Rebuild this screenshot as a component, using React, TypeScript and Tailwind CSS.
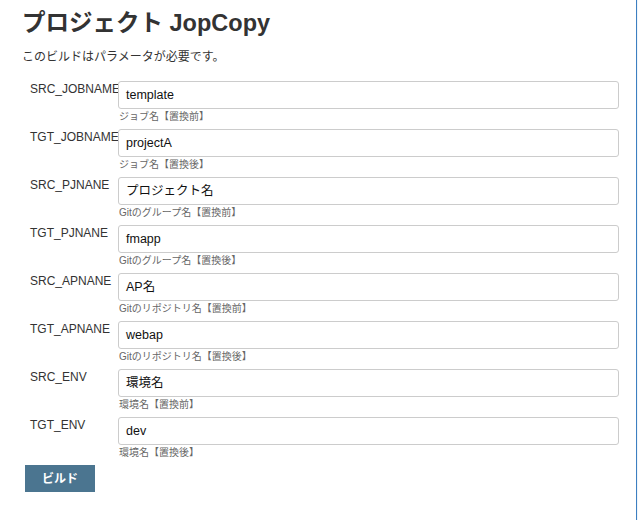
import React from "react";

const rows = [
  { name: "SRC_JOBNAME", value: "template", hint: "ジョブ名【置換前】" },
  { name: "TGT_JOBNAME", value: "projectA", hint: "ジョブ名【置換後】" },
  { name: "SRC_PJNANE", value: "プロジェクト名", hint: "Gitのグループ名【置換前】" },
  { name: "TGT_PJNANE", value: "fmapp", hint: "Gitのグループ名【置換後】" },
  { name: "SRC_APNANE", value: "AP名", hint: "Gitのリポジトリ名【置換前】" },
  { name: "TGT_APNANE", value: "webap", hint: "Gitのリポジトリ名【置換後】" },
  { name: "SRC_ENV", value: "環境名", hint: "環境名【置換前】" },
  { name: "TGT_ENV", value: "dev", hint: "環境名【置換後】" },
];

export default function App() {
  return (
    <div
      className="flex w-[638px] h-[520px] bg-white text-[#333]"
      style={{ fontFamily: '"Liberation Sans", "Noto Sans CJK JP", sans-serif' }}
    >
      <div className="flex-1 flex flex-col pl-[22px]">
        <h1 className="mt-[10px] text-[23.5px] leading-[26px] font-bold text-[#333]">
          プロジェクト JopCopy
        </h1>
        <p className="mt-[13px] text-[12px] leading-[16px] text-[#333]">
          このビルドはパラメータが必要です。
        </p>
        <div className="mt-[16px] flex flex-col">
          {rows.map((r) => (
            <div key={r.name} className="flex">
              <div className="w-[96px] pl-[8px] pt-[1px] text-[12px] leading-[14px] text-[#333] whitespace-nowrap">
                {r.name}
              </div>
              <div className="w-[501px] flex flex-col pb-[6px]">
                <div className="h-[28px] border border-[#cccccc] rounded-[3px] bg-white flex items-center pl-[7px] text-[12.5px] text-[#111]">
                  {r.value}
                </div>
                <div className="mt-[2px] text-[10px] leading-[12px] text-[#666] pl-[1px]">
                  {r.hint}
                </div>
              </div>
            </div>
          ))}
        </div>
        <div className="ml-[3px]">
          <button className="w-[70px] h-[27px] bg-[#4b7590] text-white text-[12px] font-bold flex items-center justify-center">
            ビルド
          </button>
        </div>
      </div>
      <div className="w-[2px] border-l border-[#3d7fc1] bg-[#eef5fb]" />
    </div>
  );
}
